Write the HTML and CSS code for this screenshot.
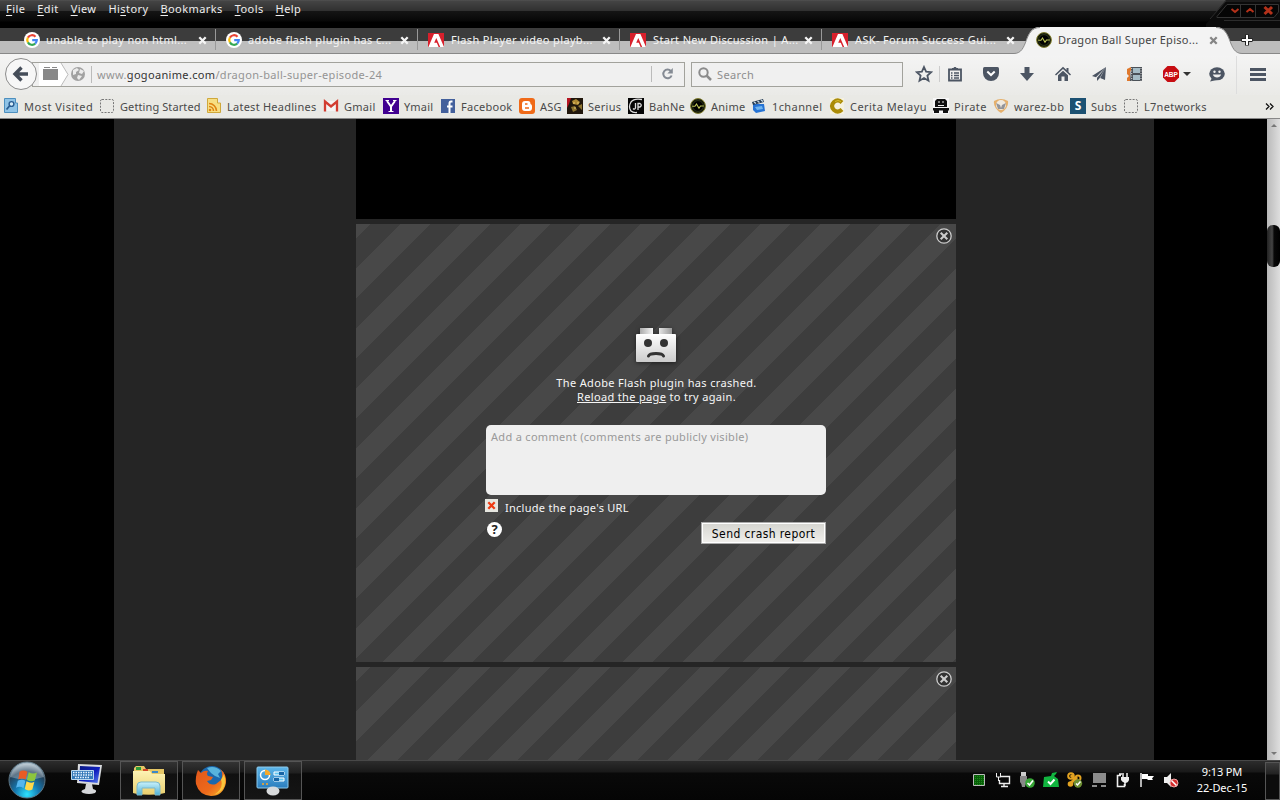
FILE: index.html
```
<!DOCTYPE html>
<html lang="en">
<head>
    <meta charset="UTF-8">
    <title>Dragon Ball Super Episode 24</title>
    <link rel="stylesheet" href="styles.css">
</head>
<body>
    <!-- shared icons -->
    <svg class="defs" width="0" height="0">
        <defs>
            <linearGradient id="brickFill" x1="0" y1="0" x2="0" y2="1"><stop offset="0" stop-color="#fff"/><stop offset="1" stop-color="#ccc"/></linearGradient>
            <linearGradient id="studFill"><stop offset="0" stop-color="#aaa"/><stop offset=".45" stop-color="#fff"/><stop offset="1" stop-color="#999"/></linearGradient>
            <radialGradient id="orb" cx=".5" cy=".9" r=".85"><stop offset="0" stop-color="#2de2ff"/><stop offset=".4" stop-color="#1478b0"/><stop offset=".75" stop-color="#23415a"/><stop offset="1" stop-color="#a9bcc8"/></radialGradient>
            <linearGradient id="folder" x1="0" y1="0" x2="0" y2="1"><stop offset="0" stop-color="#fdf3b4"/><stop offset="1" stop-color="#e9cf70"/></linearGradient>
            <linearGradient id="glass" x1="0" y1="0" x2="0" y2="1"><stop offset="0" stop-color="#c9f1fb"/><stop offset="1" stop-color="#4fb0d4"/></linearGradient>
            <linearGradient id="screen" x1="0" y1="0" x2="1" y2="1"><stop offset="0" stop-color="#0a1a80"/><stop offset=".55" stop-color="#1020c0"/><stop offset="1" stop-color="#5b82f0"/></linearGradient>
            <linearGradient id="panelBlue" x1="0" y1="0" x2="0" y2="1"><stop offset="0" stop-color="#5db6ea"/><stop offset="1" stop-color="#2b7dbd"/></linearGradient>
            <linearGradient id="foxFire" x1="0" y1="0" x2="1" y2="1"><stop offset="0" stop-color="#e0561b"/><stop offset=".6" stop-color="#ee6a1b"/><stop offset="1" stop-color="#fbb52b"/></linearGradient>
        </defs>
        <symbol id="google" viewBox="0 0 16 16">
            <circle cx="8" cy="8" r="8" fill="#fff"/>
            <g fill="none" stroke-width="2.2">
                <path d="M3.9 5.6A4.8 4.8 0 0 1 11.5 4.7" stroke="#ea4335"/>
                <path d="M3.9 5.6A4.8 4.8 0 0 0 3.9 10.4" stroke="#fbbc05"/>
                <path d="M3.9 10.4A4.8 4.8 0 0 0 11.2 11.6" stroke="#34a853"/>
                <path d="M8.2 8.1H12.8A4.8 4.8 0 0 1 11.2 11.6" stroke="#4285f4"/>
            </g>
        </symbol>
        <symbol id="adobe" viewBox="0 0 16 16">
            <path d="M0 1H16V15H0Z" fill="#d8202c"/>
            <path d="M6 2H10.4L16 15H12.2L8.3 6L6.2 10.8H8.8L10.6 15H0.4Z" fill="#fff"/>
        </symbol>
        <symbol id="pulse" viewBox="0 0 16 16">
            <circle cx="8" cy="8" r="7.4" fill="#10140a" stroke="#83802e" stroke-width="1"/>
            <circle cx="8" cy="8" r="5.4" fill="#000" stroke="#35401a" stroke-width=".8"/>
            <path d="M2.2 8.3H5L6.5 6L9 10.3L10.5 8H13.8" fill="none" stroke="#c0c858" stroke-width="1.1"/>
        </symbol>
        <symbol id="cross" viewBox="0 0 9 9">
            <path d="M1.3 1.3L7.7 7.7M7.7 1.3L1.3 7.7" stroke="currentColor" stroke-width="2.3"/>
        </symbol>
        <symbol id="closeRing" viewBox="0 0 16 16">
            <circle cx="8" cy="8" r="7.2" fill="#333" stroke="#ccc" stroke-width="1.3"/>
            <path d="M4.7 4.7L11.3 11.3M11.3 4.7L4.7 11.3" stroke="#ccc" stroke-width="2.1"/>
        </symbol>
        <symbol id="blank" viewBox="0 0 16 16">
            <rect x="1.5" y="1.5" width="13" height="13" rx="1.5" fill="none" stroke="#777" stroke-dasharray="2 1.3"/>
        </symbol>
    </svg>

    <div class="browser">
        <div class="menubar">
            <span><u>F</u>ile</span><span><u>E</u>dit</span><span><u>V</u>iew</span><span>Hi<u>s</u>tory</span><span><u>B</u>ookmarks</span><span><u>T</u>ools</span><span><u>H</u>elp</span>
            <svg class="window-buttons" width="74" height="28" viewBox="0 0 74 28">
                <path d="M0 24L20 0H74V28H0Z" fill="#0b0b0b"/>
                <path d="M4 19L20 1H74M18 20.500H74" fill="none" stroke="#2c2c2c"/>
                <path d="M11 16.500L21 4.500H72.500V12L68 17.500H11ZM34.500 4V17M49.500 4V17" fill="#050505" stroke="#343434"/>
                <g fill="none" stroke="#b3311a" stroke-width="2">
                    <path d="M25.500 9L29 12L32.500 9M40.500 12L44 9L47.500 12"/>
                    <path d="M58.500 7L66 14M66 7L58.500 14" stroke-width="3"/>
                </g>
            </svg>
        </div>

        <div class="tabs">
            <div class="tab"><svg class="icon"><use href="#google"/></svg><span>unable to play non html...</span><svg class="x"><use href="#cross"/></svg></div>
            <div class="tab"><svg class="icon"><use href="#google"/></svg><span>adobe flash plugin has c...</span><svg class="x"><use href="#cross"/></svg></div>
            <div class="tab"><svg class="icon"><use href="#adobe"/></svg><span>Flash Player video playb...</span><svg class="x"><use href="#cross"/></svg></div>
            <div class="tab"><svg class="icon"><use href="#adobe"/></svg><span>Start New Discussion | A...</span><svg class="x"><use href="#cross"/></svg></div>
            <div class="tab last"><svg class="icon"><use href="#adobe"/></svg><span>ASK- Forum Success Gui...</span><svg class="x"><use href="#cross"/></svg></div>
            <div class="tab active">
                <svg class="tab-shape" width="228" height="29" viewBox="0 0 228 29">
                    <path d="M0 29V26.500C15 26.500 9 0 26 0H202C219 0 213 26.500 228 26.500V29Z" fill="#f3f3f3"/>
                    <path d="M0 26.500C15 26.500 9 .5 26 .5M202 .5C219 .5 213 26.500 228 26.500" fill="none" stroke="#8a8a8a"/>
                </svg>
                <svg class="icon"><use href="#pulse"/></svg><span>Dragon Ball Super Episo...</span><svg class="x"><use href="#cross"/></svg>
            </div>
            <svg class="new-tab" width="12" height="12" viewBox="0 0 12 12"><path d="M6 .5V11.500M.5 6H11.500" stroke="#222" stroke-width="4"/><path d="M6 1V11M1 6H11" stroke="#fff" stroke-width="2"/></svg>
        </div>

        <div class="navbar">
            <div class="urlbar">
                <svg class="back" width="34" height="34" viewBox="0 0 34 34"><circle cx="17" cy="17" r="15.500" fill="#f7f7f7" stroke="#8c8c8c"/><path d="M24 17H12M17.500 10.500L11 17L17.500 23.500" fill="none" stroke="#454d59" stroke-width="3.400"/></svg>
                <svg class="identity" width="53" height="23" viewBox="0 0 53 23">
                    <path d="M0 0H22L29 11.500L22 23H0Z" fill="#fff"/><path d="M22 0L29 11.500L22 23" fill="none" stroke="#bbb"/>
                    <path d="M4 6H19V17H4ZM5 4H11V5H5ZM13 4H18V5H13Z" fill="#888"/>
                    <circle cx="39" cy="11" r="7" fill="#a2a2a2"/>
                    <path d="M34 7L38 5L40 7L37 9L37 11L34 12ZM41 6L45 8L43 11L40 10ZM39 12L43 13L40 17L38 15Z" fill="#ececec"/>
                    <path d="M52.500 3V20" stroke="#bbb"/>
                </svg>
                <span class="url">www.<b>gogoanime.com</b>/dragon-ball-super-episode-24</span>
                <svg class="reload" width="33" height="16" viewBox="0 0 33 16"><path d="M.5 0V16" stroke="#bbb"/><path d="M19.800 5A4.300 4.300 0 1 0 20.600 9.500" fill="none" stroke="#858b94" stroke-width="2"/><path d="M21.800 2V7.500H16.300Z" fill="#858b94"/></svg>
            </div>
            <div class="search">
                <svg width="14" height="14" viewBox="0 0 14 14"><circle cx="5.500" cy="5.500" r="4.200" fill="none" stroke="#8b8b8b" stroke-width="2"/><path d="M8.500 8.500L13 13" stroke="#8b8b8b" stroke-width="2.500"/></svg>
                <span>Search</span>
            </div>
            <div class="toolbar">
                <div class="tool star"><svg width="18" height="18" viewBox="0 0 18 18"><path d="M9 2L11.100 6.700L16.200 7.200L12.400 10.600L13.500 15.700L9 13L4.500 15.700L5.600 10.600L1.800 7.200L6.900 6.700Z" fill="none" stroke="#4c5563" stroke-width="1.800"/></svg></div>
                <div class="tool"><svg width="16" height="16" viewBox="0 0 16 16"><path d="M2 3.500H14V14.500H2Z" fill="none" stroke="#4c5563" stroke-width="1.800"/><path d="M5 4V2H6.500C6.500 .5 9.500 .5 9.500 2H11V4Z" fill="#4c5563"/><path d="M4 7H5.500M4 9.500H5.500M4 12H5.500M7 7H12M7 9.500H12M7 12H12" stroke="#4c5563" stroke-width="1.400"/></svg></div>
                <div class="tool"><svg width="16" height="14" viewBox="0 0 16 14"><path d="M1.500 0H14.500Q16 0 16 1.500V6A8 8 0 0 1 0 6V1.500Q0 0 1.500 0Z" fill="#4c5563"/><path d="M4.300 4.500L8 8L11.700 4.500" fill="none" stroke="#fff" stroke-width="2"/></svg></div>
                <div class="tool"><svg width="14" height="16" viewBox="0 0 14 16"><path d="M4.500 1H9.500V7H14L7 15L0 7H4.500Z" fill="#4c5563"/></svg></div>
                <div class="tool"><svg width="16" height="16" viewBox="0 0 16 16"><path d="M0 8.500L8 .8L11.500 4V2H13.500V6L16 8.500L15 9.500L8 3L1 9.500Z" fill="#4c5563"/><path d="M3 9.200L8 4.800L13 9.200V15H9.500V10.500H6.500V15H3Z" fill="#4c5563"/></svg></div>
                <div class="tool"><svg width="15" height="16" viewBox="0 0 15 16"><path d="M14 1L0 10L4 11.200ZM14 1L5 11.800V15L7.400 12.600ZM14 1L8.200 12L13 14Z" fill="#4c5563"/></svg></div>
                <div class="tool"><svg width="16" height="16" viewBox="0 0 16 16"><path d="M4 1H15V15H3Z" fill="#4b5158"/><path d="M6 2H13V7H6ZM6 9H13V14H6Z" fill="#a5bcc6"/><path d="M14 2V15M4.700 2V15" stroke="#ddd" stroke-dasharray="1 1.500"/><path d="M0 3L4 1V4L3 6V15H0V12L2 10L0 8Z" fill="#df782c"/></svg></div>
                <div class="tool abp"><svg width="18" height="18" viewBox="0 0 18 18"><path d="M5.500 1H12.500L17 5.500V12.500L12.500 17H5.500L1 12.500V5.500Z" fill="#c70d12"/><text x="9" y="11.800" class="abp-text">ABP</text></svg><i class="caret"></i></div>
                <div class="tool"><svg width="16" height="15" viewBox="0 0 16 15"><ellipse cx="8" cy="6.800" rx="7.800" ry="6.500" fill="#4c5563"/><path d="M3 11L1 14.500L8 13Z" fill="#4c5563"/><path d="M3.800 7.500C5 11.500 11 11.500 12.200 7.500Z" fill="#eee"/><circle cx="5.500" cy="4.800" r="1.200" fill="#eee"/><circle cx="10.500" cy="4.800" r="1.200" fill="#eee"/></svg></div>
                <div class="tool burger"><i></i><i></i><i></i></div>
            </div>
        </div>

        <div class="bookmarks">
            <div class="mark"><svg class="icon" viewBox="0 0 16 16"><path d="M1.500 .500H12.500V5H14.500V14.500H1.500Z" fill="#8fc3e6" stroke="#4d8fbe"/><circle cx="8.500" cy="6" r="2.400" fill="#d7edf9" stroke="#285c91" stroke-width="1.400"/><path d="M6.500 8L3.500 11.500" stroke="#285c91" stroke-width="1.800"/></svg><span>Most Visited</span></div>
            <div class="mark"><svg class="icon"><use href="#blank"/></svg><span>Getting Started</span></div>
            <div class="mark"><svg class="icon" viewBox="0 0 16 16"><path d="M1.500 .500H11.500V5H14.500V14.500H1.500Z" fill="#f7df83" stroke="#cfa83b"/><circle cx="4" cy="12" r="1.300" fill="#df8412"/><path d="M3 8.500A4.500 4.500 0 0 1 7.500 13M3 5.500A7.500 7.500 0 0 1 10.500 13" fill="none" stroke="#df8412" stroke-width="1.600"/></svg><span>Latest Headlines</span></div>
            <div class="mark"><svg class="icon" viewBox="0 0 16 16"><path d="M2 3H14V13H2Z" fill="#f4f4f4"/><path d="M2 13.500V3.500L8 8.500L14 3.500V13.500" fill="none" stroke="#d23c31" stroke-width="2.300"/></svg><span>Gmail</span></div>
            <div class="mark"><svg class="icon" viewBox="0 0 16 16"><path d="M0 0H16V16H0Z" fill="#400090"/><path d="M4 3L8 8.500L12 3M8 8V13.500" fill="none" stroke="#fff" stroke-width="2"/><path d="M2.500 2.500H6M10 2.500H13.500M5.500 13.500H10.500" stroke="#fff"/></svg><span>Ymail</span></div>
            <div class="mark"><svg class="icon" viewBox="0 0 16 16"><path d="M1 1H15V15H1Z" fill="#43609c"/><path d="M12.500 3.500H11Q9.500 3.500 9.500 5.500V15M7 8.500H12.500" fill="none" stroke="#fff" stroke-width="2"/></svg><span>Facebook</span></div>
            <div class="mark"><svg class="icon" viewBox="0 0 16 16"><rect width="16" height="16" rx="3" fill="#f06a18"/><path d="M6 3H9Q11.500 3 11.500 6Q13 6.300 13 8V10Q13 13 10 13H6Q3 13 3 10V6Q3 3 6 3Z" fill="#fff"/><path d="M6 6H8.500M6 10H10" stroke="#f06a18" stroke-width="1.500"/></svg><span>ASG</span></div>
            <div class="mark"><svg class="icon" viewBox="0 0 16 16"><path d="M0 0H16V16H0Z" fill="#21170c"/><path d="M0 0H4L2 6L0 10Z" fill="#b51522"/><path d="M5 3L9 1L13 4L11 7L6 6Z" fill="#b08a34"/><path d="M4 9L8 8L10 12L6 14ZM11 8L15 6V12Z" fill="#8d7430"/><path d="M6 5H8M10 5H12M7 10H9" stroke="#e8cb70"/></svg><span>Serius</span></div>
            <div class="mark"><svg class="icon" viewBox="0 0 16 16"><path d="M0 0H16V16H0Z" fill="#050505"/><path d="M14 1.500Q6 0 3 4Q0 9 3 13Q5 15 9 14.500M7.500 5V10Q6.500 12 5 10.500M10 12V5.500H12Q14.500 7 12 9H10" fill="none" stroke="#ddd" stroke-width="1.300"/></svg><span>BahNe</span></div>
            <div class="mark"><svg class="icon"><use href="#pulse"/></svg><span>Anime</span></div>
            <div class="mark"><svg class="icon" viewBox="0 0 16 16"><path d="M2 6H13L14 13L5 15L2 12Z" fill="#2673d4"/><path d="M1 4L12 1L13 4L2 7Z" fill="#263b52"/><path d="M3 4L5 5.500M6.500 3L8.500 4.500M10 2L12 3.500" stroke="#c9dce9" stroke-width="1.400"/><path d="M4 9L11 8L12 11L6 12Z" fill="#71b5ee"/></svg><span>1channel</span></div>
            <div class="mark"><svg class="icon" viewBox="0 0 16 16"><path d="M1 0H15V16H1Z" fill="#f5f1df"/><path d="M13 4.500Q9 .5 5 4Q1 8 5 12Q9 15.500 13 11.500" fill="none" stroke="#aa8b08" stroke-width="4"/><path d="M12 3.500Q9 1.500 6 3.500" fill="none" stroke="#d8bd30"/></svg><span>Cerita Melayu</span></div>
            <div class="mark"><svg class="icon" viewBox="0 0 16 16"><path d="M0 0H16V16H0Z" fill="#f7f7f7"/><path d="M4 1H12L14 3V9H2V3ZM0 10H16V12.500H0ZM1 12H6V15H1ZM10 12H15V15H10Z" fill="#111"/><path d="M5 4H7M9 4H11M5 7.500H11" stroke="#eee"/></svg><span>Pirate</span></div>
            <div class="mark"><svg class="icon" viewBox="0 0 16 16"><path d="M1 3Q8 -1 15 3Q16 10 8 15Q0 10 1 3Z" fill="#e5b06c"/><circle cx="8" cy="7" r="5" fill="#f0eadf"/><path d="M3 5L7 7L8 10L9 7L13 5L11 11H5Z" fill="#92949a"/></svg><span>warez-bb</span></div>
            <div class="mark"><i class="subs-icon">S</i><span>Subs</span></div>
            <div class="mark"><svg class="icon"><use href="#blank"/></svg><span>L7networks</span></div>
            <svg class="more" width="9" height="7" viewBox="0 0 9 7"><path d="M1 .5L4 3.500L1 6.500M5 .5L8 3.500L5 6.500" fill="none" stroke="#111" stroke-width="1.300"/></svg>
        </div>
    </div>

    <div class="viewport">
        <div class="page">
            <div class="video"></div>
            <div class="crash">
                <svg class="close"><use href="#closeRing"/></svg>
                <svg class="brick" width="46" height="40" viewBox="0 0 46 40">
                    <path d="M7 1H20V8H7ZM26 1H39V8H26Z" fill="url(#studFill)"/>
                    <rect x="3" y="7" width="40" height="28" rx="1" fill="url(#brickFill)"/>
                    <circle cx="15" cy="16" r="4" fill="#333"/><circle cx="31" cy="16" r="4" fill="#333"/>
                    <path d="M15.500 29Q16.500 26.500 23 26.500T30.500 29" fill="none" stroke="#333" stroke-width="3" stroke-linecap="round"/>
                </svg>
                <p>The Adobe Flash plugin has crashed.<br><a>Reload the page</a> to try again.</p>
                <div class="report">
                    <div class="comment">Add a comment (comments are publicly visible)</div>
                    <div class="include"><span class="check"><svg width="9" height="9"><use href="#cross"/></svg></span><span>Include the page's URL</span></div>
                    <div class="send">
                        <span class="help">?</span>
                        <button>Send crash report</button>
                    </div>
                </div>
            </div>
            <div class="crash second">
                <svg class="close"><use href="#closeRing"/></svg>
            </div>
        </div>
        <div class="scrollbar"><i class="up"></i><div class="thumb"></div><i class="down"></i></div>
    </div>

    <div class="taskbar">
        <svg class="start" width="40" height="40" viewBox="0 0 40 40">
            <circle cx="20" cy="20" r="18" fill="url(#orb)" stroke="#5d7685"/>
            <path d="M3 17A17.500 17.500 0 0 1 37 17Q20 22 3 17Z" fill="#fff" opacity=".28"/>
            <g transform="translate(3 3) scale(.87)">
                <path d="M11 10Q15 7 20 10L18 19Q14 16.500 9.500 19Z" fill="#ea5b24"/><path d="M21.500 10.500Q26 13.500 31 11L28.500 20Q24 22 19.500 19.500Z" fill="#8cc63e"/>
                <path d="M9 20.500Q13.500 18 17.700 20.500L15.500 29Q11.500 26 7 28.500Z" fill="#55b6ee"/><path d="M19 21Q24 24 28 21.500L25.700 30.500Q21 33 17 30Z" fill="#ffd84a"/>
            </g>
        </svg>
        <svg class="keyboard" width="32" height="32" viewBox="0 0 32 32">
            <path d="M7 1L31 2L28 22L6 20Z" fill="#d9dcdf"/><path d="M9 3L29 4L26.500 20L8 18Z" fill="url(#screen)"/>
            <path d="M15 21H21L22 26Q27 27 24 30Q18 32 12 30Q8 28 14 26Z" fill="#d5d7da"/>
            <path d="M.5 7.500H22.500V16.500H.5Z" fill="#3479b8" stroke="#b8d7ee"/><path d="M2 9.500H21M2 12H21M4 14.500H19" stroke="#e8f4ff" stroke-width="1.400" stroke-dasharray="1.500 1"/>
        </svg>
        <div class="task">
            <svg width="34" height="32" viewBox="0 0 34 32"><path d="M2 3L4 1H12L14 4H32V28Q17 31 1 28Z" fill="#e6c766"/><path d="M4 2H9V5H4Z" fill="#2e9d3a"/><path d="M11 4H16V6H11Z" fill="#d4492a"/><path d="M20 6H26V8H20Z" fill="#3c88c8"/><path d="M1 6H18L20 9H33V28Q17 31 1 28Z" fill="url(#folder)"/><path d="M5 30V21Q5 17 9 17H24Q28 17 28 21V30H23V23H10V30Z" fill="url(#glass)" stroke="#7bb8cb"/></svg>
        </div>
        <div class="task">
            <svg width="32" height="32" viewBox="0 0 32 32"><circle cx="17" cy="14" r="13" fill="#1c68ad"/><path d="M12 3Q20 0 26 6L23 9L25 13L20 11L16 8Z" fill="#58b4dd"/><path d="M3 5L6 8Q9 5 13 6Q11 9 13 11L18 12L16 15L12 16Q15 21 21 19L26 15Q29 9 25 4Q32 9 31 18Q28 31 16 31Q4 30 1 19Q0 12 3 5Z" fill="url(#foxFire)"/><path d="M29 9Q34 25 19 30Q29 23 26 15Z" fill="#fac63c"/></svg>
        </div>
        <div class="task">
            <svg width="34" height="30" viewBox="0 0 34 30"><rect x="1" y="1" width="31" height="21" rx="1" fill="url(#panelBlue)" stroke="#8dcbed"/><circle cx="9" cy="9" r="4.500" fill="none" stroke="#fff" stroke-width="1.500"/><path d="M9 9V3.500A5.500 5.500 0 0 1 14.500 9Z" fill="#f5a92b"/><path d="M18 6H28V9H18ZM18 12H28V15H18Z" fill="#63c7f2" stroke="#fff"/><path d="M23 6H28V9H23ZM18 12H23V15H18Z" fill="#1765a6"/><circle cx="7" cy="18" r="1" fill="#fca925"/><circle cx="11" cy="18" r="1" fill="#fca925"/><ellipse cx="17" cy="25" rx="6.500" ry="4.500" fill="#d8dadc"/></svg>
        </div>

        <div class="tray">
            <svg viewBox="0 0 16 16"><path d="M2.500 2.500H13.500V13.500H2.500Z" fill="#085d08" stroke="#bbb"/><path d="M4 4.500H13M4 6.500H13M4 8.500H13M4 10.500H13M4 12.500H13" stroke="#1c8a1c" stroke-dasharray="1 1"/></svg>
            <svg viewBox="0 0 16 16"><path d="M5 4.500H14.500V11.500H4.500V8M9 12V14M6 14.500H13" fill="none" stroke="#eee" stroke-width="1.400"/><path d="M1.500 1V5H5.500V1M3.500 5V9" fill="none" stroke="#eee"/></svg>
            <svg viewBox="0 0 16 16"><path d="M2 0H7V4H2Z" fill="#ccc"/><path d="M1 4H8V11Q6 12 6 15H3Q3 12 1 10Z" fill="#888"/><circle cx="11" cy="11" r="4.800" fill="#36a535"/><path d="M8.500 11L10.500 13L14 8.500" fill="none" stroke="#fff" stroke-width="1.700"/></svg>
            <svg viewBox="0 0 16 16"><path d="M1 5L8 4L9 1L14 0L13 2L11 4L15 7L16 15H0Z" fill="#11b43f"/><path d="M5 9.500L7.500 12L11.500 7.500" fill="none" stroke="#fff" stroke-width="2"/></svg>
            <svg viewBox="0 0 16 16"><path d="M3 12L10 5M4 3L12 12" stroke="#e3a321" stroke-width="3"/><circle cx="4" cy="4" r="2.800" fill="none" stroke="#e3a321" stroke-width="2"/><circle cx="11" cy="6" r="2.500" fill="none" stroke="#e3a321" stroke-width="2"/><circle cx="3.500" cy="12" r="2.800" fill="#e3a321"/><circle cx="11" cy="11.500" r="4.200" fill="#6c8f32"/><path d="M9 11.500L10.500 13L13.500 9.500" fill="none" stroke="#fff" stroke-width="1.500"/></svg>
            <svg viewBox="0 0 16 16"><path d="M2 1H15V11H2ZM1 13H6V15H1ZM10 13H15V15H10Z" fill="#8c8c8c"/></svg>
            <svg viewBox="0 0 16 16"><path d="M6 3.500H2.500V14.500H9.500V12M4 2H7" fill="none" stroke="#eee" stroke-width="1.600"/><path d="M6 5H14V8Q13 11 10 11Q7 10 6 8Z" fill="#eee"/><path d="M8 1V5M12 1V5M10 10V14" stroke="#eee" stroke-width="1.500"/></svg>
            <svg viewBox="0 0 16 16"><path d="M2 1V15" stroke="#eee" stroke-width="1.500"/><path d="M3 2H9V4H15L13 6.500L14 8H9L8 7H3Z" fill="#fff"/></svg>
            <svg viewBox="0 0 16 16"><path d="M1 5H4L8 1V15L4 11H1Z" fill="#eee"/><circle cx="11" cy="11" r="4" fill="#d32a2a" stroke="#f1a5a5"/><path d="M8.500 8.500L13.500 13.500" stroke="#fff" stroke-width="1.500"/></svg>
        </div>
        <div class="clock">9:13 PM<br>22-Dec-15</div>
        <div class="show-desktop"></div>
    </div>
</body>
</html>
```
FILE: styles.css
```
* {
    box-sizing: border-box;
}
body {
    margin: 0;
    width: 1280px;
    height: 800px;
    overflow: hidden;
    display: flex;
    flex-direction: column;
    background: #000;
    font-family: "Noto Sans", sans-serif;
    font-size: 11px;
    letter-spacing: 0.2px;
}
svg {
    display: block;
    flex-shrink: 0;
}
.defs {
    position: absolute;
}
.icon {
    width: 16px;
    height: 16px;
}

/* menu */
.browser {
    height: 119px;
    flex-shrink: 0;
    display: flex;
    flex-direction: column;
    background: #f0f0f0;
}
.menubar {
    position: relative;
    height: 28px;
    display: flex;
    padding: 1px 0 0 6px;
    gap: 12px;
    background: linear-gradient(#555 0, #444 1px, #303030 11px, #151515 11px, #070707 21px, #000 22px);
    color: #eee;
    line-height: 16px;
    letter-spacing: 0.42px;
    white-space: nowrap;
}
.menubar u {
    text-underline-offset: 2px;
}
.window-buttons {
    position: absolute;
    right: 0;
    top: 0;
}

/* tabs */
.tabs {
    height: 26px;
    display: flex;
    padding-left: 14px;
    background: linear-gradient(#3c3c3c 13px, #bdbdbd 13px, #bdbdbd 25px, #888 25px);
}
.tab {
    position: relative;
    width: 202px;
    height: 24px;
    display: flex;
    align-items: center;
    padding-left: 10px;
    color: #f4f4f4;
    white-space: nowrap;
}
.tab:not(.last):not(.active) {
    background: linear-gradient(#999, #999) right -1px top 1px / 1px 21px no-repeat;
}
.tab:not(.last):not(.active) {
    background-position: right 0 top 1px;
}
.tab span {
    width: 151px;
    margin-left: 6px;
    padding-bottom: 2px;
    letter-spacing: 0.35px;
}
.tab .x {
    width: 9px;
    height: 9px;
    margin-left: 1px;
}
.tab:nth-child(n+3) span {
    margin-left: 7px;
    width: 150px;
}
.tab.active {
    width: 220px;
    margin-left: -2px;
    padding-left: 14px;
    color: #444;
}
.tab.active span {
    margin-left: 6px;
    letter-spacing: 0.28px;
}
.tab.active > * {
    position: relative;
}
.tab.active .tab-shape {
    position: absolute;
    left: -8px;
    top: -1px;
}
.tab.active .x {
    color: #858585;
}
.new-tab {
    margin: 6px 0 0 -1px;
}

/* navigation */
.navbar {
    height: 41px;
    display: flex;
    align-items: center;
    padding: 0 0 1px 32px;
    background: linear-gradient(#f4f4f4, #eaeae7);
}
.urlbar {
    position: relative;
    width: 653px;
    flex-shrink: 0;
    height: 25px;
    display: flex;
    align-items: center;
    border: 1px solid #a2a29c;
    background: #f0f0f0;
    color: #949494;
}
.back {
    position: absolute;
    left: -29px;
    top: -6px;
}
.identity {
    margin-left: 6px;
}
.url {
    flex: 1;
    margin-left: 5px;
    letter-spacing: 0.33px;
}
.url b {
    color: #333;
    font-weight: normal;
}
.search {
    width: 212px;
    flex-shrink: 0;
    height: 25px;
    margin-left: 6px;
    display: flex;
    align-items: center;
    padding-left: 6px;
    gap: 5px;
    border: 1px solid #a2a29c;
    background: #f0f0f0;
    color: #8e8e8e;
    letter-spacing: 0.4px;
}
.toolbar {
    display: flex;
    height: 40px;
    margin-left: 3px;
}
.tool {
    width: 36px;
    flex-shrink: 0;
    display: flex;
    align-items: center;
    justify-content: center;
}
.tool.star {
    width: 34px;
    padding-left: 2px;
    background: linear-gradient(#ccc, #ccc) right 0 center / 1px 16px no-repeat;
}
.toolbar .tool:nth-child(2) {
    margin-left: -3px;
}
.tool.abp {
    position: relative;
    margin-right: 10px;
}
.abp-text {
    fill: #fff;
    font: bold 6.5px "Liberation Sans", sans-serif;
    letter-spacing: 0;
    text-anchor: middle;
}
.caret {
    position: absolute;
    right: -2px;
    top: 18px;
    border: 4px solid transparent;
    border-top-color: #333;
    border-bottom: 0;
}
.tool.burger {
    width: 43px;
    margin-left: 1px;
    flex-direction: column;
    gap: 2px;
    border-left: 1px solid #ddd;
}
.burger i {
    width: 16px;
    height: 3px;
    background: #4c5563;
}

/* bookmarks */
.bookmarks {
    height: 24px;
    display: flex;
    align-items: center;
    padding: 0 0 1px 3px;
    background: #e9e9e5;
    border-bottom: 1px solid #888;
    color: #4a4a4a;
}
.mark {
    display: flex;
    align-items: center;
    gap: 5px;
    white-space: nowrap;
    letter-spacing: 0.27px;
}
.mark:nth-child(1) { width: 96px; letter-spacing: 0.5px; }
.mark:nth-child(2) { width: 107px; letter-spacing: 0.1px; }
.mark:nth-child(3) { width: 117px; letter-spacing: 0.25px; }
.mark:nth-child(4) { width: 60px; }
.mark:nth-child(5) { width: 57px; }
.mark:nth-child(6) { width: 79px; }
.mark:nth-child(7) { width: 48px; }
.mark:nth-child(8) { width: 61px; }
.mark:nth-child(9) { width: 62px; }
.mark:nth-child(10) { width: 61px; }
.mark:nth-child(11) { width: 78px; letter-spacing: 0.4px; }
.mark:nth-child(12) { width: 104px; letter-spacing: 0.45px; }
.mark:nth-child(13) { width: 60px; letter-spacing: 0.45px; }
.mark:nth-child(14) { width: 77px; letter-spacing: 0.35px; }
.mark:nth-child(15) { width: 53px; }
.subs-icon {
    width: 16px;
    height: 16px;
    background: #1c5172;
    color: #fff;
    font: bold 12px/16px "Noto Sans", sans-serif;
    letter-spacing: 0;
    text-align: center;
}
.more {
    margin: 0 6px 0 auto;
}

/* page */
.viewport {
    height: 641px;
    display: flex;
    padding-left: 114px;
}
.page {
    width: 1040px;
    margin-right: 113px;
    padding-left: 242px;
    overflow: hidden;
    background: #252525;
}
.video {
    width: 600px;
    height: 100px;
    background: #000;
}
.crash {
    position: relative;
    width: 600px;
    height: 438px;
    margin-top: 5px;
    padding-top: 103px;
    display: flex;
    flex-direction: column;
    align-items: center;
    background: linear-gradient(135deg, #484848 12.5%, #3d3d3d 12.5%, #3d3d3d 37.5%, #484848 37.5%, #484848 62.5%, #3d3d3d 62.5%, #3d3d3d 87.5%, #484848 87.5%) 0 0 / 60px 60px;
    color: #f6f6f6;
}
.close {
    position: absolute;
    top: 4px;
    right: 4px;
    width: 16px;
    height: 16px;
}
.brick {
    filter: drop-shadow(0 1px 2px rgba(0, 0, 0, 0.5));
}
.crash p {
    margin: 9px 0 0 1px;
    line-height: 14px;
    text-align: center;
    letter-spacing: 0.34px;
}
.crash a {
    text-decoration: underline;
}
.report {
    width: 340px;
    margin-top: 21px;
}
.comment {
    height: 70px;
    padding: 4px 5px;
    border-radius: 5px;
    background: #efefef;
    color: #999;
    line-height: 15px;
    letter-spacing: 0.31px;
}
.include {
    display: flex;
    height: 18px;
    margin: 4px 0 0 -1px;
    line-height: 18px;
    letter-spacing: 0.27px;
}
.check {
    width: 13px;
    height: 13px;
    margin-right: 7px;
    padding: 2px;
    background: #e6e6e0;
    color: #ee3a12;
}
.send {
    display: flex;
    justify-content: space-between;
    margin-top: 5px;
}
.help {
    width: 15px;
    height: 15px;
    margin-left: 1px;
    border-radius: 50%;
    background: #fff;
    color: #222;
    font: bold 13px/15px "Noto Sans", sans-serif;
    letter-spacing: 0;
    text-align: center;
}
.send button {
    width: 125px;
    height: 22px;
    padding: 1px 0 0;
    border: 1px solid #aaa;
    box-shadow: inset 0 0 0 1px #fff;
    background: linear-gradient(#d5d5d0, #f0efec);
    color: #000;
    font: 12px "DejaVu Sans Condensed", "DejaVu Sans", sans-serif;
    letter-spacing: 0.4px;
}
.scrollbar {
    width: 13px;
    height: 641px;
    display: flex;
    flex-direction: column;
    align-items: center;
    background: linear-gradient(90deg, #b9b9b9, #dedede);
}
.thumb {
    width: 13px;
    height: 42px;
    margin-top: 98px;
    border-radius: 6px;
    background: linear-gradient(90deg, #222, #444 40%, #080808 55%, #000);
}
.up,
.down {
    border: 3px solid transparent;
}
.up {
    margin-top: 5px;
    border-top: 0;
    border-bottom-color: #777;
}
.down {
    margin: auto 0 5px;
    border-bottom: 0;
    border-top-color: #777;
}

/* taskbar */
.taskbar {
    height: 40px;
    display: flex;
    align-items: center;
    padding-left: 7px;
    border-top: 1px solid #484848;
    background: linear-gradient(#2c2c2c, #191919 11px, #090909 12px, #050505);
    color: #fff;
}
.start {
    margin-top: -1px;
}
.keyboard {
    margin: -3px 17px 0 24px;
}
.task {
    width: 58px;
    height: 39px;
    margin-right: 4px;
    display: flex;
    align-items: center;
    justify-content: center;
    border: 1px solid #555;
    background: linear-gradient(#333, #202020 11px, #101010 12px, #151515);
}
.tray {
    display: flex;
    gap: 8px;
    margin: -2px 0 0 auto;
}
.tray svg {
    width: 16px;
    height: 16px;
}
.clock {
    width: 86px;
    margin-top: -2px;
    line-height: 16px;
    text-align: center;
    font-family: "Noto Sans", sans-serif;
    letter-spacing: -0.15px;
}
.show-desktop {
    width: 15px;
    height: 38px;
    border: 1px solid #555;
    background: linear-gradient(#3c3c3c, #222 11px, #0c0c0c 12px);
}
```
